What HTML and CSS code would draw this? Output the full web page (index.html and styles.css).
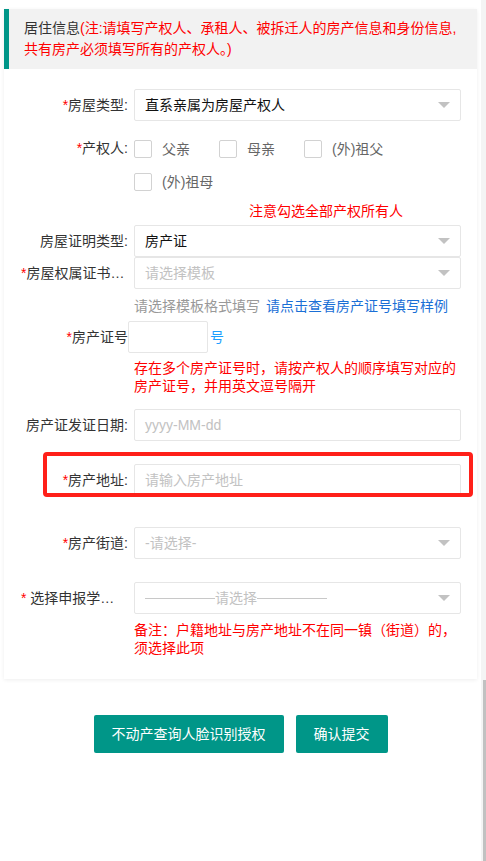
FILE: index.html
```html
<!DOCTYPE html>
<html lang="zh-CN">
<head>
<meta charset="utf-8">
<title>居住信息</title>
<link rel="stylesheet" href="styles.css">
</head>
<body>
<div class="page">
  <div class="card">
    <div class="quote">居住信息<span class="red">(注:请填写产权人、承租人、被拆迁人的房产信息和身份信息,共有房产必须填写所有的产权人。)</span></div>
    <div class="form">
      <div class="item it-type">
        <label class="lbl"><i>*</i>房屋类型:</label>
        <div class="field"><div class="select"><span class="val">直系亲属为房屋产权人</span><span class="arrow"></span></div></div>
      </div>

      <div class="item it-owner">
        <label class="lbl lbl-cb"><i>*</i>产权人:</label>
        <div class="field checks">
          <span class="cb"><span class="box"></span><span class="cbt">父亲</span></span>
          <span class="cb"><span class="box"></span><span class="cbt">母亲</span></span>
          <span class="cb"><span class="box"></span><span class="cbt">(外)祖父</span></span>
          <span class="cb"><span class="box"></span><span class="cbt">(外)祖母</span></span>
        </div>
      </div>
      <div class="note-owner">注意勾选全部产权所有人</div>

      <div class="item it-proof">
        <label class="lbl">房屋证明类型:</label>
        <div class="field"><div class="select"><span class="val">房产证</span><span class="arrow"></span></div></div>
      </div>
      <div class="item">
        <label class="lbl"><i>*</i>房屋权属证书模板:</label>
        <div class="field"><div class="select"><span class="ph">请选择模板</span><span class="arrow"></span></div></div>
      </div>
      <div class="hint"><span class="gray">请选择模板格式填写</span><a class="link">请点击查看房产证号填写样例</a></div>

      <div class="item it-cert">
        <label class="lbl"><i>*</i>房产证号</label>
        <div class="cert-input"></div>
        <span class="hao">号</span>
      </div>
      <div class="rednote rn-cert">存在多个房产证号时，请按产权人的顺序填写对应的房产证号，并用英文逗号隔开</div>

      <div class="item it-date">
        <label class="lbl">房产证发证日期:</label>
        <div class="field"><div class="input"><span class="ph">yyyy-MM-dd</span></div></div>
      </div>

      <div class="item it-addr">
        <label class="lbl"><i>*</i>房产地址:</label>
        <div class="field"><div class="input"><span class="ph">请输入房产地址</span></div></div>
        <div class="mark"></div>
      </div>

      <div class="item it-street">
        <label class="lbl"><i>*</i>房产街道:</label>
        <div class="field"><div class="select"><span class="ph">-请选择-</span><span class="arrow"></span></div></div>
      </div>

      <div class="item it-school">
        <label class="lbl"><i>*</i> 选择申报学校片区:</label>
        <div class="field"><div class="select"><span class="dashsel"><span class="dl"></span><span class="ph">请选择</span><span class="dl"></span></span><span class="arrow"></span></div></div>
      </div>
      <div class="rednote rn-school">备注：户籍地址与房产地址不在同一镇（街道）的，须选择此项</div>
    </div>
  </div>
  <div class="actions">
    <button class="btn">不动产查询人脸识别授权</button><button class="btn">确认提交</button>
  </div>
</div>
<div class="scrollbar"><div class="thumb"></div></div>
</body>
</html>
```

FILE: styles.css
```css
* { box-sizing: border-box; }
html, body { margin: 0; padding: 0; background: #fff; }
body {
  font-family: "Liberation Sans", "Noto Sans CJK SC", sans-serif;
  font-size: 14px;
  color: #333;
}
.page { padding: 9px 9px 0 4px; }
.card {
  background: #fff;
  box-shadow: 0 1px 4px rgba(0,0,0,0.07);
  padding-bottom: 22px;
}
.quote {
  background: #f2f2f2;
  border-left: 5px solid #009688;
  padding: 9px 15px;
  line-height: 21px;
  color: #333;
}
.red { color: #ff0000; }
.form { padding: 0 16px 0 17px; }
.item { display: flex; align-items: flex-start; position: relative; }
.lbl {
  width: 107px;
  flex: none;
  text-align: right;
  line-height: 32px;
  height: 32px;
  white-space: nowrap;
  overflow: hidden;
  text-overflow: ellipsis;
  color: #333;
}
.lbl i { font-style: normal; color: #ff0000; }
.field { flex: 1; margin-left: 6px; min-width: 0; }
.select, .input {
  height: 32px;
  border: 1px solid #e6e6e6;
  border-radius: 2px;
  background: #fff;
  display: flex;
  align-items: center;
  padding: 0 10px;
  line-height: 20px;
}
.val { flex: 1; color: #111; }
.ph { color: #c2c2c2; }
.select .ph { flex: none; }
.select > .ph { flex: 1; }
.arrow {
  width: 0; height: 0;
  border-left: 6px solid transparent;
  border-right: 6px solid transparent;
  border-top: 6px solid #c2c2c2;
  flex: none;
}
.it-type { margin-top: 20px; }
.it-owner { margin-top: 11px; }
.lbl-cb { line-height: 33px; height: 33px; }
.checks { display: flex; flex-wrap: wrap; }
.cb { display: flex; align-items: center; height: 33px; margin-right: 29px; }
.box {
  width: 18px; height: 18px;
  border: 1px solid #d2d2d2;
  border-radius: 2px;
  background: #fff;
}
.cbt { margin-left: 10px; color: #666; line-height: 20px; }
.note-owner {
  margin-top: 3px;
  margin-left: 228px;
  line-height: 20px;
  color: #ff0000;
}
.it-proof { margin-top: 4px; }
.hint { margin: 7px 0 0 113px; line-height: 20px; }
.gray { color: #999; }
.link { color: #1a6fd6; margin-left: 6px; text-decoration: none; }
.it-cert { margin-top: 5px; align-items: center; }
.cert-input {
  width: 80px; height: 32px;
  border: 1px solid #e6e6e6;
  border-radius: 2px;
  background: #fff;
  flex: none;
}
.hao { color: #1e9fff; margin-left: 2px; line-height: 32px; }
.rednote { margin-left: 113px; color: #ff0000; line-height: 18px; }
.rn-cert { margin-top: 6px; }
.it-date { margin-top: 14px; }
.it-addr { margin-top: 23px; }
.mark {
  position: absolute;
  left: 22px; right: -12px; top: -12px; bottom: -1px;
  border: 4px solid #ff2019;
  border-radius: 4px;
  pointer-events: none;
}
.it-street { margin-top: 31px; }
.it-school { margin-top: 23px; }
.dashsel { flex: 1; display: flex; align-items: center; }
.dl { width: 70px; height: 1px; background: #c8c8c8; }
.rn-school { margin-top: 7px; }
.actions { text-align: center; margin-top: 36px; font-size: 0; }
.btn {
  height: 38px;
  line-height: 38px;
  padding: 0 18px;
  border: 0;
  border-radius: 2px;
  background: #009688;
  color: #fff;
  font-family: "Liberation Sans", "Noto Sans CJK SC", sans-serif;
  font-size: 14px;
  margin: 0 6px;
  vertical-align: top;
}
.scrollbar {
  position: fixed;
  top: 0; right: 0; bottom: 0;
  width: 5px;
  background: #f4f4f4;
}
.thumb {
  position: absolute;
  top: 680px; bottom: 0; right: 0;
  width: 3px;
  background: #c1c1c1;
}
```
